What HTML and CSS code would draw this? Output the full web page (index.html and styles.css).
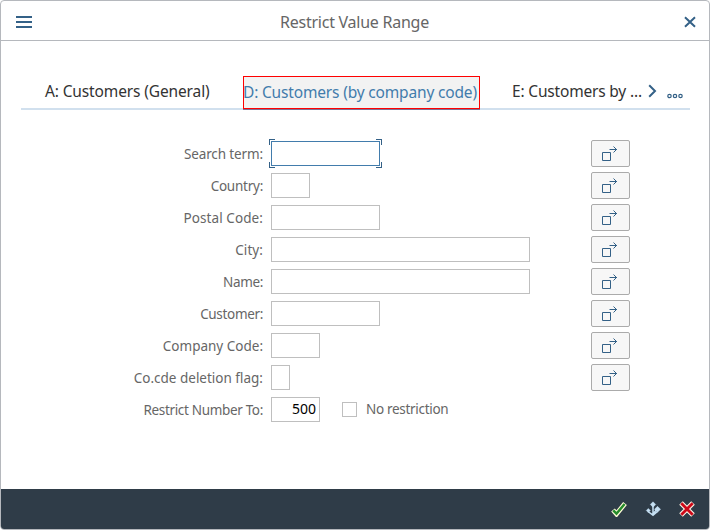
FILE: index.html
```html
<!DOCTYPE html>
<html lang="en">
<head>
<meta charset="utf-8">
<title>Restrict Value Range</title>
<link rel="stylesheet" href="styles.css">
</head>
<body>
<svg width="0" height="0" class="defs" aria-hidden="true">
  <symbol id="multi" viewBox="0 0 16 16"><path d="M.5 6.500h8v8h-8zM7.500 3.500h7.500M11.500.5l3 3-3 3" fill="none" stroke="#346187"/></symbol>
</svg>
<div class="dialog">
  <header class="header">
    <svg class="menu" width="16" height="12" viewBox="0 0 16 12"><path d="M0 1h16M0 6h16M0 11h16" stroke="#346187" stroke-width="2"/></svg>
    <h1 class="title"><span>Restrict Value Range</span></h1>
    <svg class="close" width="12" height="12" viewBox="0 0 12 12"><path d="M1 1.200l10 9.600M11 1.200L1 10.800" stroke="#346187" stroke-width="2"/></svg>
  </header>
  <main class="content">
    <nav class="tabs">
      <div class="tab general"><span>A: Customers (General)</span></div>
      <div class="tab selected"><span>D: Customers (by company code)</span></div>
      <div class="tab clipped"><span>E: Customers by ...</span></div>
      <svg class="chevron" width="9" height="14" viewBox="0 0 9 14"><path d="M1.200 1.200L7 7l-5.800 5.800" fill="none" stroke="#346187" stroke-width="2"/></svg>
      <svg class="more" width="16" height="6" viewBox="0 0 16 6"><g fill="none" stroke="#346187" stroke-width="1.200"><circle cx="2.500" cy="3" r="1.700"/><circle cx="8" cy="3" r="1.700"/><circle cx="13.500" cy="3" r="1.700"/></g></svg>
    </nav>
    <form class="form">
      <div class="row"><label class="l1">Search term:</label><div class="field medium focused"></div><button type="button"><svg width="16" height="16"><use href="#multi"/></svg></button></div>
      <div class="row"><label class="l2">Country:</label><div class="field short"></div><button type="button"><svg width="16" height="16"><use href="#multi"/></svg></button></div>
      <div class="row"><label class="l3">Postal Code:</label><div class="field medium"></div><button type="button"><svg width="16" height="16"><use href="#multi"/></svg></button></div>
      <div class="row"><label class="l3">City:</label><div class="field long"></div><button type="button"><svg width="16" height="16"><use href="#multi"/></svg></button></div>
      <div class="row"><label class="l4">Name:</label><div class="field long"></div><button type="button"><svg width="16" height="16"><use href="#multi"/></svg></button></div>
      <div class="row"><label class="l4">Customer:</label><div class="field medium"></div><button type="button"><svg width="16" height="16"><use href="#multi"/></svg></button></div>
      <div class="row"><label>Company Code:</label><div class="field code"></div><button type="button"><svg width="16" height="16"><use href="#multi"/></svg></button></div>
      <div class="row"><label>Co.cde deletion flag:</label><div class="field flag"></div><button type="button"><svg width="16" height="16"><use href="#multi"/></svg></button></div>
      <div class="row"><label class="l4">Restrict Number To:</label><div class="field code number">500</div><span class="checkbox"></span><span class="check-label">No restriction</span></div>
    </form>
  </main>
  <footer class="footer">
    <svg width="16" height="16" viewBox="0 0 16 16"><path d="M2 9l3.500 4L14 2.500" fill="none" stroke="#fffbd8" stroke-width="4.800"/><path d="M2.300 9.300l3.200 3.400L13.600 3" fill="none" stroke="#258b2a" stroke-width="2.500"/></svg>
    <svg width="16" height="16" viewBox="0 0 16 16"><path d="M8 4v10M3 10.500l5 3.700 4.500-3.700M8 13l4-5" fill="none" stroke="#c5dff2" stroke-width="1.500"/><path d="M8 .8l2.700 2.700L8 6.200 5.300 3.500zM12.500 5.300l3 3-3 3-3-3zM3.300 7.500l2 2-2 2-2-2z" fill="#c5dff2" stroke="#c5dff2" stroke-width=".5" stroke-linejoin="round"/></svg>
    <svg width="16" height="16" viewBox="0 0 16 16"><path d="M2 2l12 12M14 2L2 14" stroke="#fff5e8" stroke-width="5"/><path d="M2.300 2.300l11.400 11.400M13.700 2.300L2.300 13.700" stroke="#cc0818" stroke-width="2.800"/></svg>
  </footer>
</div>
</body>
</html>
```
FILE: styles.css
```css
* { box-sizing: border-box; }
body { margin: 0; background: #fff; font-family: "Noto Sans", "Open Sans", sans-serif; color: #666; }
.defs { display: none; }
svg { display: block; flex: none; }
.dialog { width: 710px; height: 530px; border: 1px solid #b5b8bd; border-radius: 4px; overflow: hidden; display: flex; flex-direction: column; }
.header { height: 40px; border-bottom: 1px solid #b5b8bd; display: flex; align-items: center; padding: 2px 13px 0 15px; }
.title { flex: 1; margin: 0; font-size: 16px; line-height: 20px; font-weight: 400; text-align: center; padding-right: 7px; letter-spacing: -0.25px; }
.content { flex: 1; padding: 35px 19px 0 20px; }
.tabs { height: 34px; display: flex; border-bottom: 2px solid #d1e0ee; font-size: 15.500px; line-height: 31px; white-space: nowrap; color: #333; }
.general { width: 222px; padding-left: 24px; letter-spacing: -0.13px; }
.selected { width: 237px; height: 33px; border: 1px solid #f00; box-shadow: 0 1px #7d7094; background: #f2f2f2; color: #427cac; line-height: 31px; letter-spacing: -0.17px; text-indent: -1px; }
.clipped { width: 162px; padding-left: 32px; letter-spacing: -0.18px; }
.chevron { margin: 8px 0 0 6px; }
.more { margin: 17px 0 0 10px; }
.form { padding-top: 30px; }
.row { height: 27px; margin-bottom: 5px; display: flex; align-items: center; font-size: 13.500px; }
label { width: 242px; text-align: right; line-height: 20px; padding-top: 1px; white-space: nowrap; }
.l1 { letter-spacing: -0.12px; }
.l2 { letter-spacing: -0.25px; }
.l3 { letter-spacing: 0.08px; }
.l4 { letter-spacing: -0.33px; }
.field { height: 25px; margin-left: 8px; border: 1px solid #bfbfbf; background: #fff; position: relative; flex: none; }
.medium { width: 109px; }
.short { width: 39px; }
.long { width: 259px; }
.code { width: 49px; }
.flag { width: 19px; }
.number { color: #000; text-align: right; font-size: 14px; line-height: 22px; padding-right: 3px; }
.focused { border-color: #427cac; }
.focused::before, .focused::after { content: ""; position: absolute; top: -3px; bottom: -3px; width: 6px; background: linear-gradient(#346187, #346187) top / 100% 1px no-repeat, linear-gradient(#346187, #346187) bottom / 100% 1px no-repeat, linear-gradient(#346187, #346187) left top / 1px 6px no-repeat, linear-gradient(#346187, #346187) left bottom / 1px 6px no-repeat; }
.focused::before { left: -3px; }
.focused::after { right: -3px; transform: scaleX(-1); }
button { width: 39px; height: 27px; padding: 0 0 0 10px; margin-left: auto; margin-right: 60px; border: 1px solid #ababab; border-radius: 2px; background: #f7f7f7; }
.checkbox { width: 15px; height: 15px; border: 1px solid #bfbfbf; margin-left: 22px; }
.check-label { margin-left: 9px; line-height: 20px; letter-spacing: -0.3px; padding-bottom: 1px; }
.footer { height: 40px; background: #2f3c48; display: flex; align-items: center; justify-content: flex-end; gap: 18px; padding-right: 14px; }
```
